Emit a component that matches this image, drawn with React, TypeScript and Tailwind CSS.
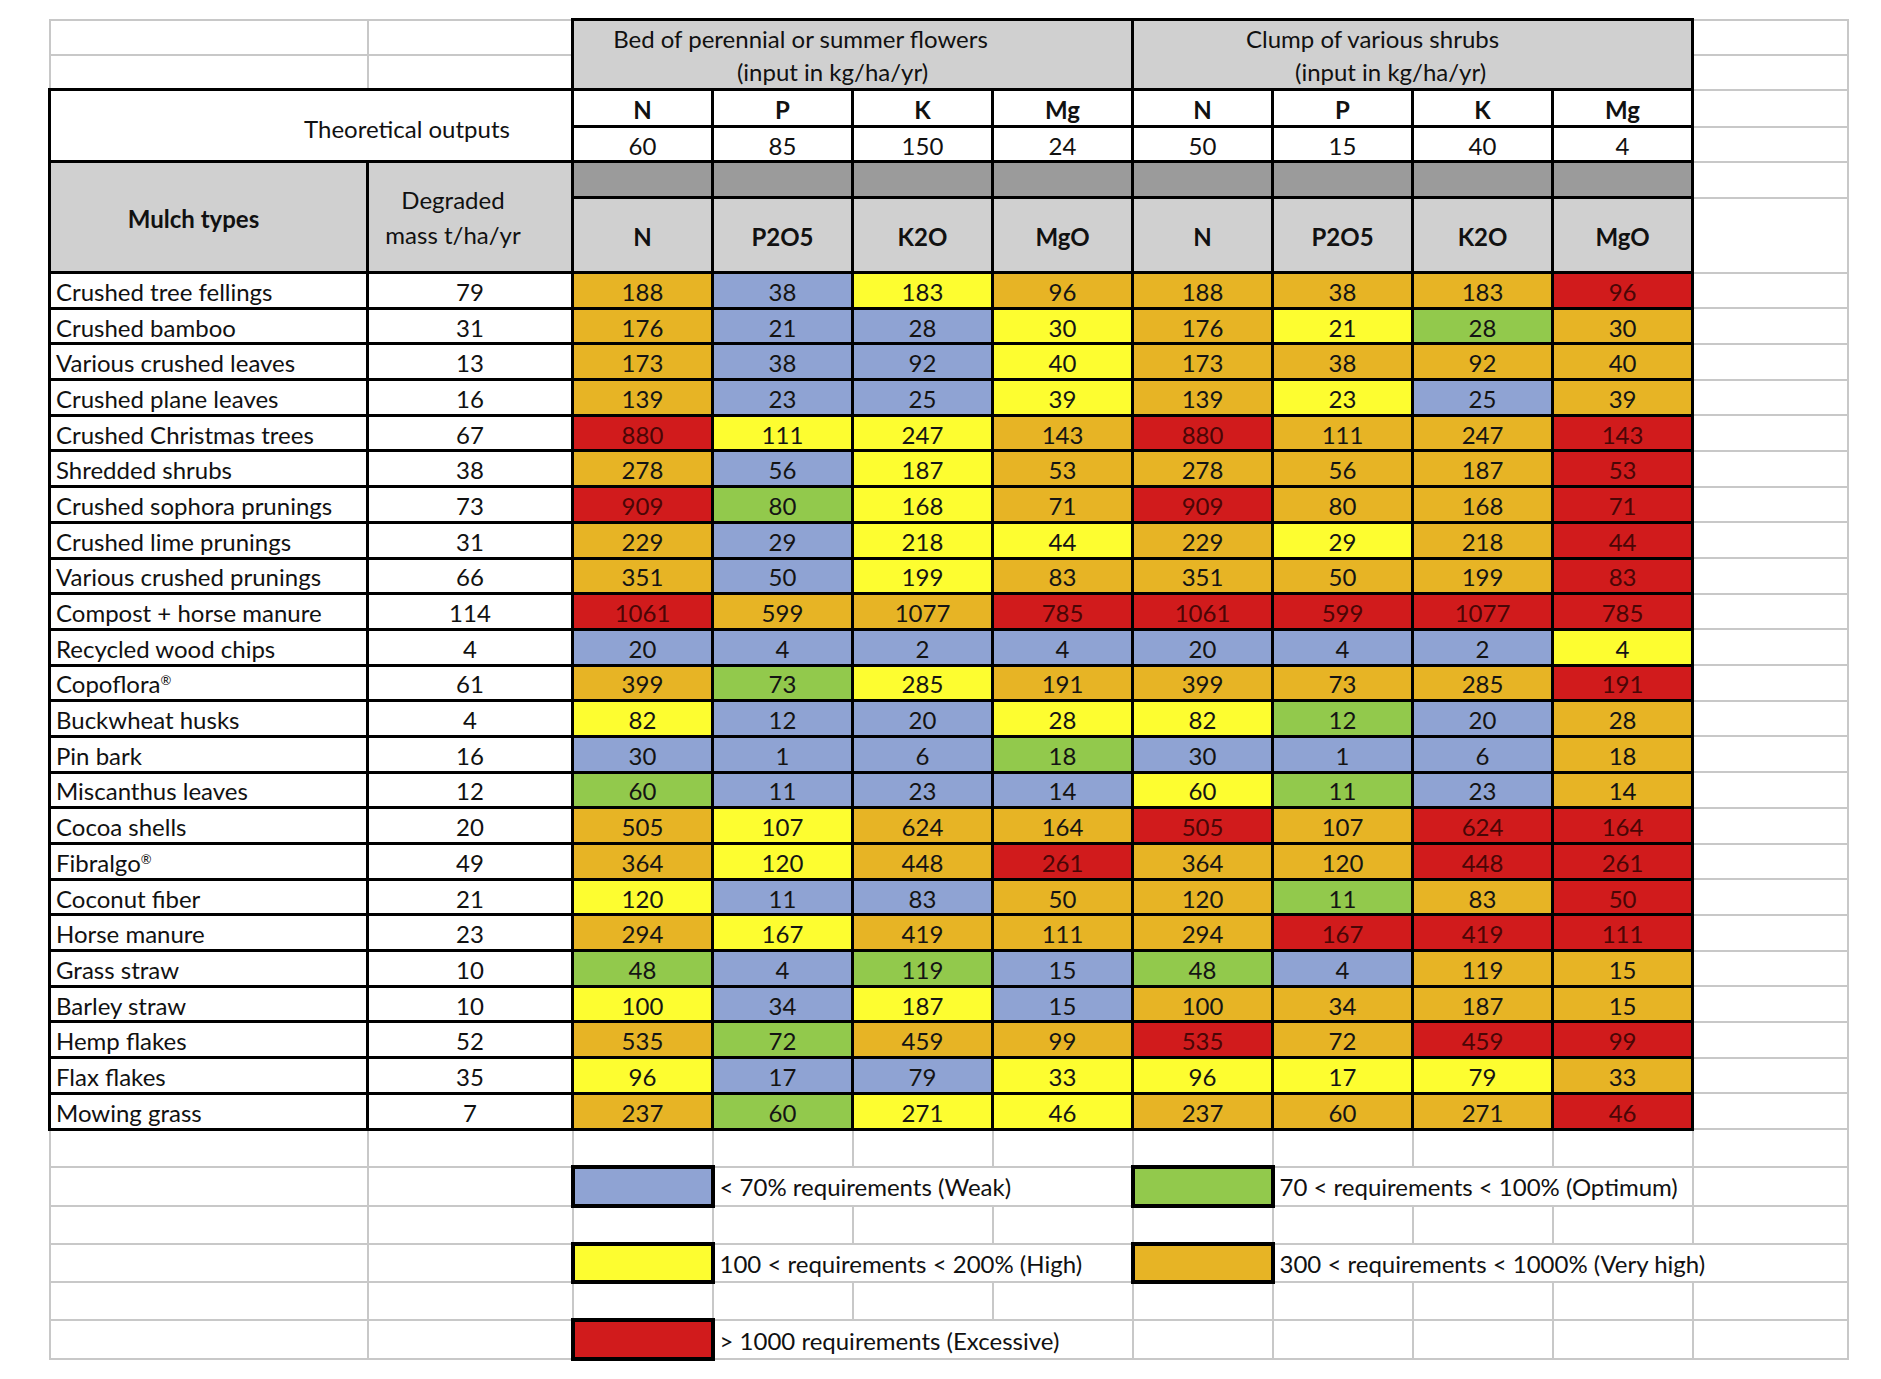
import React from "react";

const BG: Record<string, string> = {
  B: "bg-[#8fa3d3] text-[#141414]",
  G: "bg-[#92c94c] text-[#141414]",
  Y: "bg-[#fdfd30] text-[#141414]",
  O: "bg-[#e7b425] text-[#141414]",
  R: "bg-[#d11b1c] text-[#4a0606]",
};

const rows: [string, string, number[], string][] = [
  ["Crushed tree fellings", "79", [188, 38, 183, 96, 188, 38, 183, 96], "OBYOOOOR"],
  ["Crushed bamboo", "31", [176, 21, 28, 30, 176, 21, 28, 30], "OBBYOYGO"],
  ["Various crushed leaves", "13", [173, 38, 92, 40, 173, 38, 92, 40], "OBBYOOOO"],
  ["Crushed plane leaves", "16", [139, 23, 25, 39, 139, 23, 25, 39], "OBBYOYBO"],
  ["Crushed Christmas trees", "67", [880, 111, 247, 143, 880, 111, 247, 143], "RYYOROOR"],
  ["Shredded shrubs", "38", [278, 56, 187, 53, 278, 56, 187, 53], "OBYOOOOR"],
  ["Crushed sophora prunings", "73", [909, 80, 168, 71, 909, 80, 168, 71], "RGYOROOR"],
  ["Crushed lime prunings", "31", [229, 29, 218, 44, 229, 29, 218, 44], "OBYYOYOR"],
  ["Various crushed prunings", "66", [351, 50, 199, 83, 351, 50, 199, 83], "OBYOOOOR"],
  ["Compost + horse manure", "114", [1061, 599, 1077, 785, 1061, 599, 1077, 785], "ROORRRRR"],
  ["Recycled wood chips", "4", [20, 4, 2, 4, 20, 4, 2, 4], "BBBBBBBY"],
  ["Copoflora", "61", [399, 73, 285, 191, 399, 73, 285, 191], "OGYOOOOR"],
  ["Buckwheat husks", "4", [82, 12, 20, 28, 82, 12, 20, 28], "YBBYYGBO"],
  ["Pin bark", "16", [30, 1, 6, 18, 30, 1, 6, 18], "BBBGBBBO"],
  ["Miscanthus leaves", "12", [60, 11, 23, 14, 60, 11, 23, 14], "GBBBYGBO"],
  ["Cocoa shells", "20", [505, 107, 624, 164, 505, 107, 624, 164], "OYOORORR"],
  ["Fibralgo", "49", [364, 120, 448, 261, 364, 120, 448, 261], "OYOROORR"],
  ["Coconut fiber", "21", [120, 11, 83, 50, 120, 11, 83, 50], "YBBOOGOR"],
  ["Horse manure", "23", [294, 167, 419, 111, 294, 167, 419, 111], "OYOOORRR"],
  ["Grass straw", "10", [48, 4, 119, 15, 48, 4, 119, 15], "GBGBGBOO"],
  ["Barley straw", "10", [100, 34, 187, 15, 100, 34, 187, 15], "YBYBOOOO"],
  ["Hemp flakes", "52", [535, 72, 459, 99, 535, 72, 459, 99], "OGOORORR"],
  ["Flax flakes", "35", [96, 17, 79, 33, 96, 17, 79, 33], "YBBYYYYO"],
  ["Mowing grass", "7", [237, 60, 271, 46, 237, 60, 271, 46], "OGYYOOOR"],
];

const registered = new Set(["Copoflora", "Fibralgo"]);

const G = "border-2 border-[#c8c8c8]";
const K = "border-[3px] border-black";
const S = "border-[4px] border-black";

const topHead = ["N", "P", "K", "Mg", "N", "P", "K", "Mg"];
const topVals = ["60", "85", "150", "24", "50", "15", "40", "4"];
const oxHead = ["N", "P2O5", "K2O", "MgO", "N", "P2O5", "K2O", "MgO"];

function Blank({ n }: { n: number }) {
  return (
    <>
      {Array.from({ length: n }).map((_, i) => (
        <td key={i} className={G} />
      ))}
    </>
  );
}

export default function App() {
  return (
    <div className="min-h-[1379px] w-[1881px] bg-white pl-[48px] pt-[18px] font-[family-name:Lato,sans-serif] text-[24px] text-[#111]">
      <table className="w-[1798px] table-fixed border-collapse">
        <colgroup>
          <col className="w-[318px]" />
          <col className="w-[205px]" />
          <col className="w-[140px]" />
          <col className="w-[140px]" />
          <col className="w-[140px]" />
          <col className="w-[140px]" />
          <col className="w-[140px]" />
          <col className="w-[140px]" />
          <col className="w-[140px]" />
          <col className="w-[140px]" />
          <col className="w-[155px]" />
        </colgroup>
        <tbody>
          <tr className="h-[35px]">
            <td className={G} />
            <td className={G} />
            <td colSpan={4} rowSpan={2} className={`${K} bg-[#d0d0d0] text-center align-middle leading-[33px]`}>
              <div className="pr-[104px]">Bed of perennial or summer flowers</div>
              <div className="pr-[40px]">(input in kg/ha/yr)</div>
            </td>
            <td colSpan={4} rowSpan={2} className={`${K} bg-[#d0d0d0] text-center align-middle leading-[33px]`}>
              <div className="pr-[80px]">Clump of various shrubs</div>
              <div className="pr-[44px]">(input in kg/ha/yr)</div>
            </td>
            <td className={G} />
          </tr>
          <tr className="h-[35px]">
            <td className={G} />
            <td className={G} />
            <td className={G} />
          </tr>
          <tr className="h-[37px]">
            <td colSpan={2} rowSpan={2} className={`${K} bg-white pl-[192px] pt-[6px] text-center align-middle`}>
              Theoretical outputs
            </td>
            {topHead.map((h, i) => (
              <td key={i} className={`${K} bg-white pt-[4px] text-center align-middle font-bold leading-none`}>
                {h}
              </td>
            ))}
            <td className={G} />
          </tr>
          <tr className="h-[35px]">
            {topVals.map((v, i) => (
              <td key={i} className={`${K} bg-white pt-[4px] text-center align-middle leading-none`}>
                {v}
              </td>
            ))}
            <td className={G} />
          </tr>
          <tr className="h-[36px]">
            <td rowSpan={2} className={`${K} bg-[#d0d0d0] pr-[30px] pt-[3px] text-center align-middle font-bold`}>
              Mulch types
            </td>
            <td rowSpan={2} className={`${K} bg-[#d0d0d0] pr-[34px] text-center align-middle leading-[35px]`}>
              <div>Degraded</div>
              <div>mass t/ha/yr</div>
            </td>
            {oxHead.map((_, i) => (
              <td key={i} className={`${K} bg-[#9b9b9b]`} />
            ))}
            <td className={G} />
          </tr>
          <tr className="h-[75px]">
            {oxHead.map((h, i) => (
              <td key={i} className={`${K} bg-[#d0d0d0] pt-[4px] text-center align-middle font-bold leading-none`}>
                {h}
              </td>
            ))}
            <td className={G} />
          </tr>
          {rows.map(([name, mass, vals, cols]) => (
            <tr key={name} className="h-[35.7px]">
              <td className={`${K} bg-white pl-[5px] pt-[3px] text-left align-middle leading-none whitespace-nowrap`}>
                {name}
                {registered.has(name) && <span className="relative -top-[8px] text-[13px]">®</span>}
              </td>
              <td className={`${K} bg-white pt-[3px] text-center align-middle leading-none`}>{mass}</td>
              {vals.map((v, i) => (
                <td key={i} className={`${K} ${BG[cols[i]]} pt-[3px] text-center align-middle leading-none`}>
                  {v}
                </td>
              ))}
              <td className={G} />
            </tr>
          ))}
          <tr className="h-[38.3px]">
            <Blank n={11} />
          </tr>
          <tr className="h-[38.3px]">
            <Blank n={2} />
            <td className={`${S} bg-[#8fa3d3]`} />
            <td colSpan={3} className={`${G} pl-[5px] pt-[2px] text-left align-middle leading-none whitespace-nowrap`}>
              &lt; 70% requirements (Weak)
            </td>
            <td className={`${S} bg-[#92c94c]`} />
            <td colSpan={3} className={`${G} pl-[5px] pt-[2px] text-left align-middle leading-none whitespace-nowrap`}>
              70 &lt; requirements &lt; 100% (Optimum)
            </td>
            <td className={G} />
          </tr>
          <tr className="h-[38.3px]">
            <Blank n={11} />
          </tr>
          <tr className="h-[38.3px]">
            <Blank n={2} />
            <td className={`${S} bg-[#fdfd30]`} />
            <td colSpan={3} className={`${G} pl-[5px] pt-[2px] text-left align-middle leading-none whitespace-nowrap`}>
              100 &lt; requirements &lt; 200% (High)
            </td>
            <td className={`${S} bg-[#e7b425]`} />
            <td colSpan={4} className={`${G} pl-[5px] pt-[2px] text-left align-middle leading-none whitespace-nowrap`}>
              300 &lt; requirements &lt; 1000% (Very high)
            </td>
          </tr>
          <tr className="h-[38.3px]">
            <Blank n={11} />
          </tr>
          <tr className="h-[38.3px]">
            <Blank n={2} />
            <td className={`${S} bg-[#d11b1c]`} />
            <td colSpan={3} className={`${G} pl-[5px] pt-[2px] text-left align-middle leading-none whitespace-nowrap`}>
              &gt; 1000 requirements (Excessive)
            </td>
            <Blank n={5} />
          </tr>
        </tbody>
      </table>
    </div>
  );
}
